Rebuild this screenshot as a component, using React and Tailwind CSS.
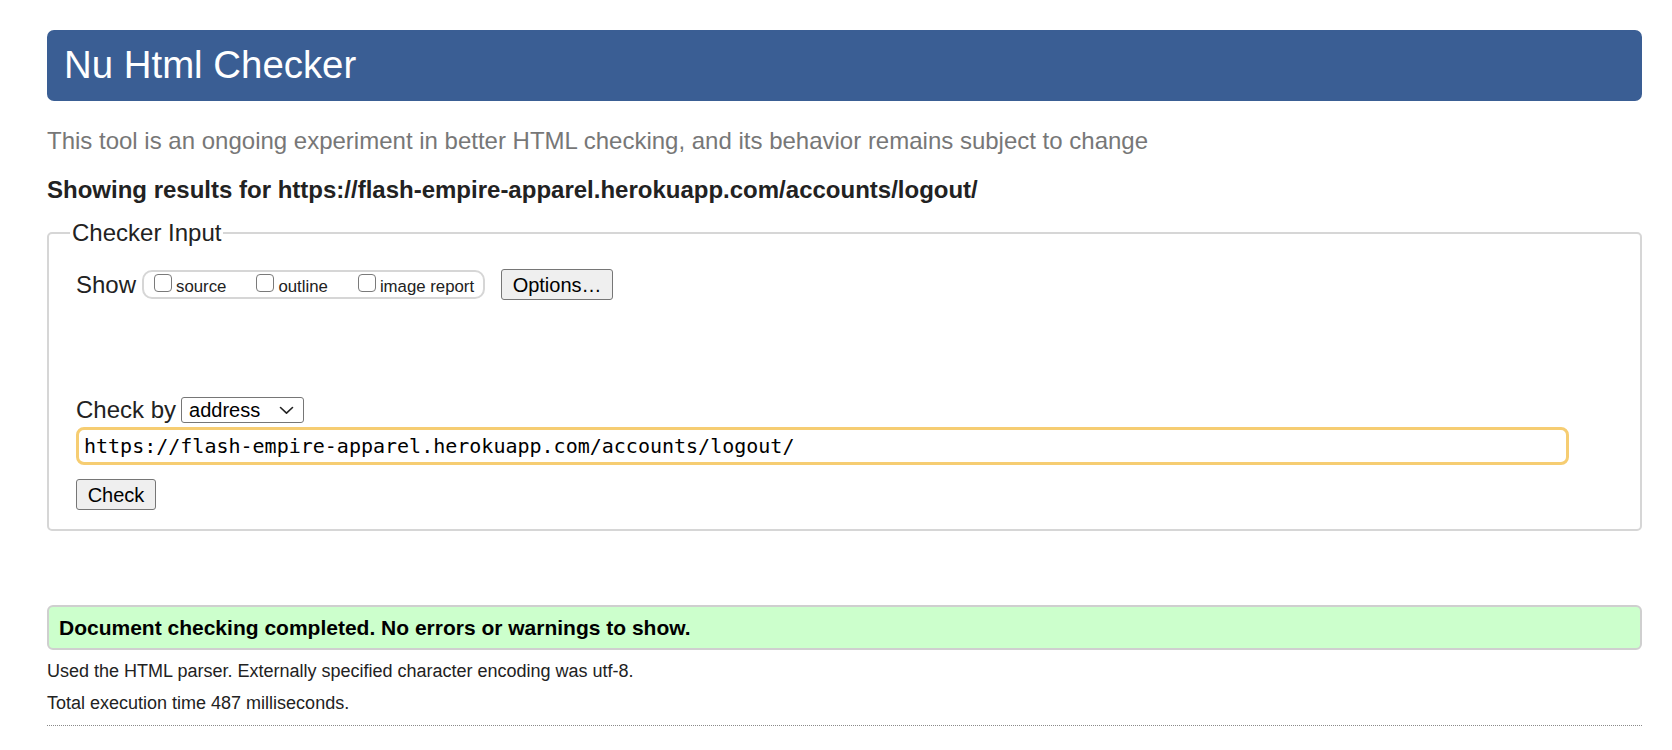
export default function App() {
  const url = "https://flash-empire-apparel.herokuapp.com/accounts/logout/";
  const boxes = ["source", "outline", "image report"];
  return (
    <div className="min-h-[750px] bg-white pl-[47px] pr-[30px] pt-[30px] font-['Liberation_Sans',Arial,sans-serif] text-[#222]">
      <header className="flex h-[71px] items-center rounded-[7px] bg-[#3a5e94] pl-[17px]">
        <h1 className="text-[38.4px] leading-none text-white">Nu Html Checker</h1>
      </header>
      <p className="mt-[26px] text-[24px] leading-[28px] text-[#777]">
        This tool is an ongoing experiment in better HTML checking, and its behavior remains subject to change
      </p>
      <p className="mt-[21px] text-[24px] font-bold leading-[28px]">Showing results for {url}</p>
      <fieldset className="mt-[15px] rounded-[5px] border-2 border-[#d6d6d6] pb-[19px] pl-[27px] pr-[27px]">
        <legend className="-ml-[6px] px-[2px] text-[24px] leading-[28px]">Checker Input</legend>
        <div className="mt-[22px] flex h-[31px] items-center">
          <span className="text-[24px] leading-[28px]">Show</span>
          <div className="ml-[6px] flex h-[29px] items-center rounded-[10px] border-2 border-[#d6d6d6] pl-[10px] pr-[9px]">
            {boxes.map((b, i) => (
              <div key={b} className={"flex items-center " + (i < boxes.length - 1 ? "mr-[30px]" : "")}>
                <span className="mb-[3px] block h-[18px] w-[18px] rounded-[4px] border border-[#7a7a7a] bg-white" />
                <span className="ml-[4px] pt-[4px] text-[16.8px] leading-[20px]">{b}</span>
              </div>
            ))}
          </div>
          <button className="ml-[16px] flex h-[31px] w-[112px] items-center justify-center rounded-[3px] border border-[#767676] bg-[#efefef] text-[20px] leading-none text-black">
            Options…
          </button>
        </div>
        <div className="mt-[97px] flex h-[26px] items-center">
          <span className="text-[24px] leading-[28px]">Check by</span>
          <div className="ml-[5px] flex h-[26px] w-[123px] items-center justify-between rounded-[3px] border border-[#767676] bg-white pl-[7px] pr-[9px]">
            <span className="text-[20px] leading-none text-black">address</span>
            <svg width="15" height="9" viewBox="0 0 15 9" fill="none">
              <path d="M1.5 1.5 L7.5 7.2 L13.5 1.5" stroke="#222" strokeWidth="1.6" strokeLinecap="round" strokeLinejoin="round" />
            </svg>
          </div>
        </div>
        <div className="mt-[4px] flex h-[38px] w-[1493px] items-center rounded-[8px] border-[3px] border-[#f6cd72] bg-white pl-[5px] font-['DejaVu_Sans_Mono',monospace] text-[20px] leading-none text-black">
          {url}
        </div>
        <button className="mt-[14px] flex h-[31px] w-[80px] items-center justify-center rounded-[3px] border border-[#767676] bg-[#efefef] text-[20px] leading-none text-black">
          Check
        </button>
      </fieldset>
      <div className="mt-[74px] flex h-[45px] items-center rounded-[6px] border-2 border-[#cfcfcf] bg-[#ccffcc] pl-[10px]">
        <span className="text-[21px] font-bold leading-none text-black">
          Document checking completed. No errors or warnings to show.
        </span>
      </div>
      <p className="mt-[9px] text-[18px] leading-[24px]">
        Used the HTML parser. Externally specified character encoding was utf-8.
      </p>
      <p className="mt-[8px] text-[18px] leading-[24px]">Total execution time 487 milliseconds.</p>
      <div className="mt-[10px] border-t border-dotted border-[#8a8a8a]" />
    </div>
  );
}
